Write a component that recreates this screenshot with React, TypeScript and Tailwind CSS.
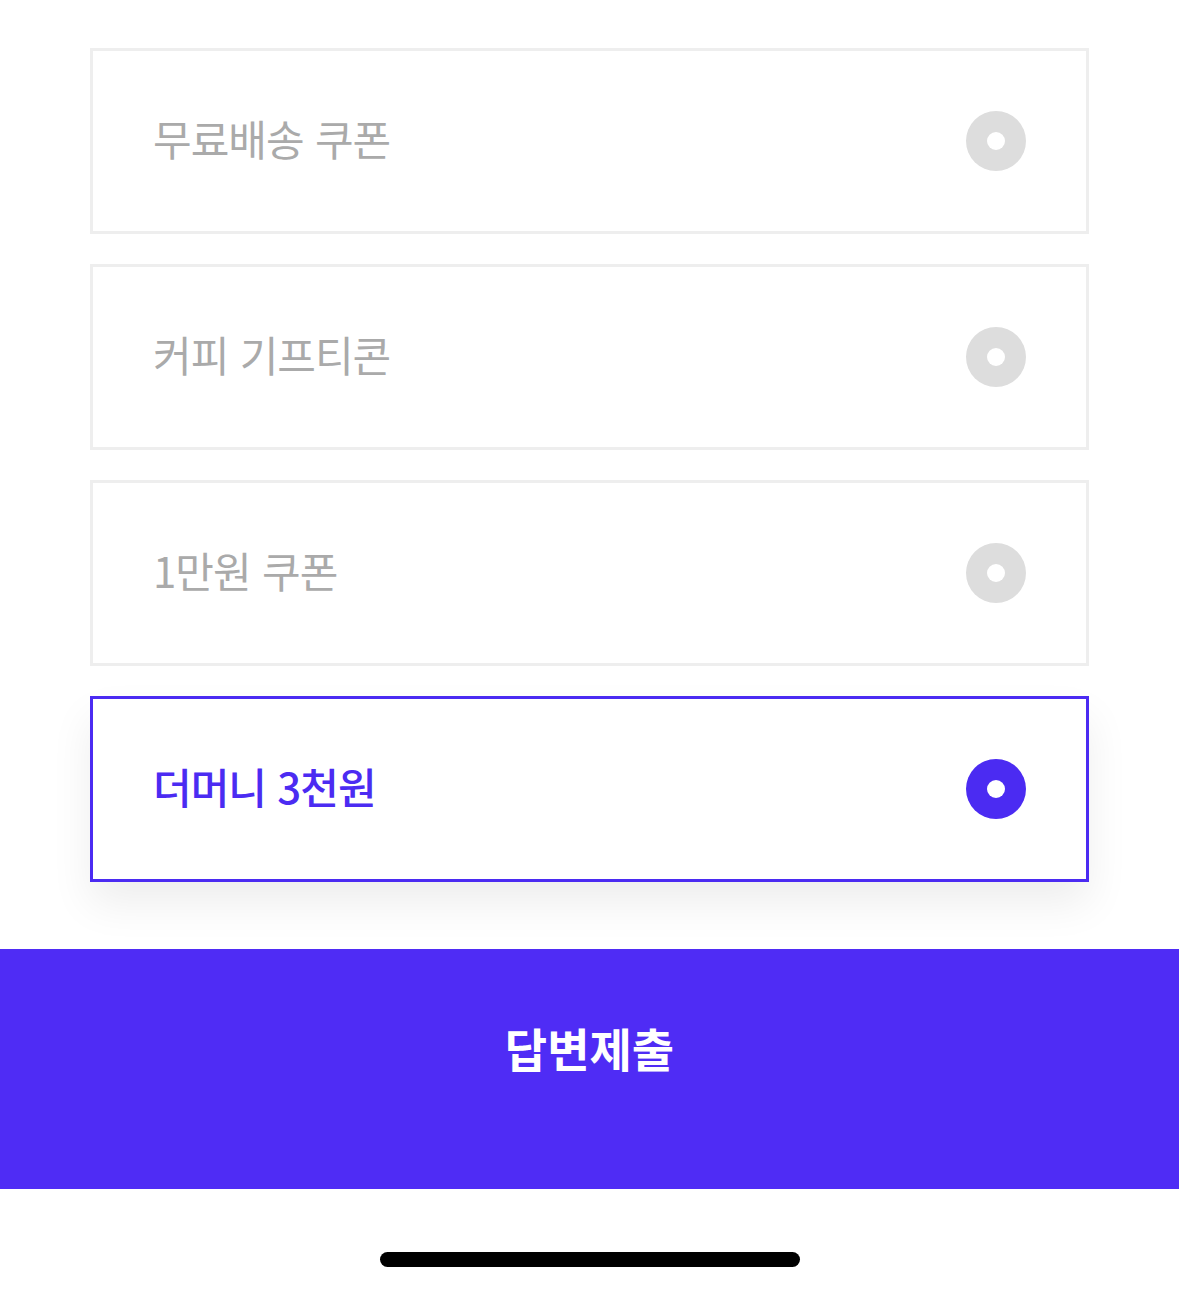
import { useState } from "react";

const options = ["무료배송 쿠폰", "커피 기프티콘", "1만원 쿠폰", "더머니 3천원"];

function Radio({ checked }: { checked: boolean }) {
  return (
    <span
      className={`flex h-[60px] w-[60px] shrink-0 items-center justify-center rounded-full ${
        checked ? "bg-[#4b2bf2]" : "bg-[#dddddd]"
      }`}
    >
      <span className="h-[18px] w-[18px] rounded-full bg-white" />
    </span>
  );
}

export default function App() {
  const [selected, setSelected] = useState(3);

  return (
    <div
      className="flex min-h-[1291px] w-full flex-col bg-white"
      style={{ fontFamily: '"Noto Sans CJK KR", "Noto Sans", sans-serif' }}
    >
      <div className="flex flex-col gap-[30px] px-[90px] pt-[48px]">
        {options.map((label, i) => {
          const on = i === selected;
          return (
            <button
              key={label}
              onClick={() => setSelected(i)}
              className={`flex h-[186px] w-full items-center justify-between border-[3px] bg-white pl-[60px] pr-[60px] text-left ${
                on
                  ? "border-[#4b2bf2] shadow-[0_22px_40px_rgba(0,0,0,0.07)]"
                  : "border-[#eeeeee]"
              }`}
            >
              <span
                className={`pb-[6px] text-[42px] leading-none tracking-[-1px] [word-spacing:3px] ${
                  on ? "font-medium text-[#4b2bf2]" : "font-normal text-[#aaaaaa]"
                }`}
              >
                {label}
              </span>
              <Radio checked={on} />
            </button>
          );
        })}
      </div>

      <button className="mt-[67px] flex h-[240px] w-full items-center justify-center bg-[#4f2cf5] pb-[44px]">
        <span className="text-[46px] font-bold leading-none tracking-normal text-white">
          답변제출
        </span>
      </button>

      <div className="flex justify-center pt-[63px] pb-[24px]">
        <div className="h-[15px] w-[420px] rounded-full bg-black" />
      </div>
    </div>
  );
}
